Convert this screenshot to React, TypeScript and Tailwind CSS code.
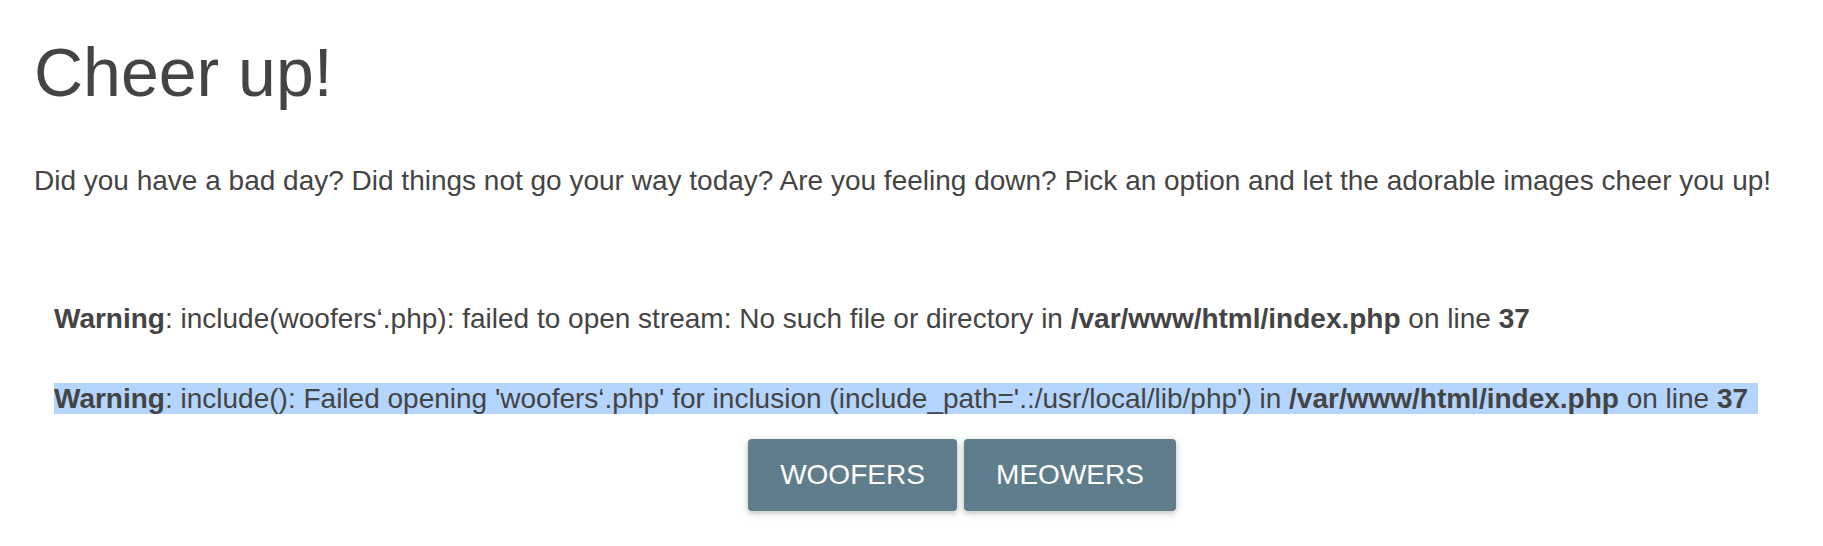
export default function App() {
  return (
    <div className="min-h-[546px] bg-white pl-[34px] pt-[30px] text-[#444] font-['Liberation_Sans',Arial,sans-serif]">
      <h1 className="text-[68px] leading-[84px] font-normal">Cheer up!</h1>
      <p className="mt-[46px] text-[28px] leading-[42px]">
        Did you have a bad day? Did things not go your way today? Are you feeling down? Pick an option and let the adorable images cheer you up!
      </p>

      <div className="mt-[97px] pl-[20px] text-[28px] leading-[40px]">
        <div>
          <b>Warning</b>: include(woofers‘.php): failed to open stream: No such file or directory in <b>/var/www/html/index.php</b> on line <b>37</b>
        </div>
        <div className="mt-[40px]">
          <span className="bg-[#b4d5fe] pr-[10px]">
            <b>Warning</b>: include(): Failed opening 'woofers‘.php' for inclusion (include_path='.:/usr/local/lib/php') in <b>/var/www/html/index.php</b> on line <b>37</b>
          </span>
        </div>
      </div>

      <div className="mt-[20px] flex justify-center gap-[7px] pl-[67px]">
        <button className="h-[72px] w-[209px] rounded-[4px] bg-[#607d8b] text-[28px] text-white uppercase shadow-[0_2px_5px_rgba(0,0,0,0.16),0_2px_10px_rgba(0,0,0,0.12)]">
          Woofers
        </button>
        <button className="h-[72px] w-[212px] rounded-[4px] bg-[#607d8b] text-[28px] text-white uppercase shadow-[0_2px_5px_rgba(0,0,0,0.16),0_2px_10px_rgba(0,0,0,0.12)]">
          Meowers
        </button>
      </div>
    </div>
  )
}
